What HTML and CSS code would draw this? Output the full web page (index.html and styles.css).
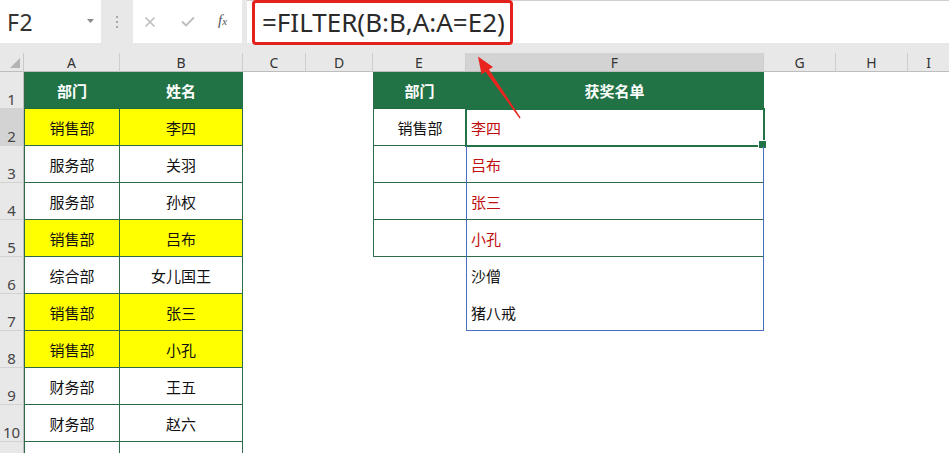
FILE: index.html
```html
<!DOCTYPE html>
<html lang="zh-CN">
<head>
<meta charset="utf-8">
<title>FILTER</title>
<link rel="stylesheet" href="styles.css">
</head>
<body>
<div class="app">
  <div class="toolbar">
    <div class="namebox"><span class="ref">F2</span><svg class="caret" width="7" height="4" viewBox="0 0 7 4"><path d="M0 0h7L3.5 4z" fill="#8a8a8a"/></svg></div>
    <div class="grip"><i></i><i></i><i></i></div>
    <div class="fbtns">
      <svg class="ico" width="12" height="12" viewBox="0 0 12 12"><path d="M1.5 1.5l9 9M10.5 1.5l-9 9" stroke="#bdbdbd" stroke-width="1.6" fill="none"/></svg>
      <svg class="ico" width="14" height="11" viewBox="0 0 14 11"><path d="M1 5.5l4 4L13 1.5" stroke="#bdbdbd" stroke-width="1.8" fill="none"/></svg>
      <span class="fx">f<span class="fxs">x</span></span>
    </div>
    <div class="fbar"><div class="formula">=FILTER(B:B,A:A=E2)</div></div>
  </div>
  <div class="band"></div>
  <div class="sheet">
    <div class="corner"><svg width="10" height="10" viewBox="0 0 10 10"><path d="M10 0V10H0z" fill="#b4b4b4"/></svg></div>
    <div class="ch">A</div><div class="ch">B</div><div class="ch">C</div><div class="ch">D</div><div class="ch">E</div><div class="ch sel">F</div><div class="ch">G</div><div class="ch">H</div><div class="ch last">I</div>

    <div class="rh">1</div>
    <div class="t first hd">部门</div><div class="t hd">姓名</div><div class="c"></div><div class="c"></div>
    <div class="t first hd">部门</div><div class="t hd">获奖名单</div><div class="c"></div><div class="c"></div><div class="c"></div>

    <div class="rh sel">2</div>
    <div class="t first y">销售部</div><div class="t y">李四</div><div class="c"></div><div class="c"></div>
    <div class="e">销售部</div><div class="f red gl cur">李四</div><div class="c"></div><div class="c"></div><div class="c"></div>

    <div class="rh">3</div>
    <div class="t first">服务部</div><div class="t">关羽</div><div class="c"></div><div class="c"></div>
    <div class="e"></div><div class="f red gl">吕布</div><div class="c"></div><div class="c"></div><div class="c"></div>

    <div class="rh">4</div>
    <div class="t first">服务部</div><div class="t">孙权</div><div class="c"></div><div class="c"></div>
    <div class="e"></div><div class="f red gl">张三</div><div class="c"></div><div class="c"></div><div class="c"></div>

    <div class="rh">5</div>
    <div class="t first y">销售部</div><div class="t y">吕布</div><div class="c"></div><div class="c"></div>
    <div class="e"></div><div class="f red gl">小孔</div><div class="c"></div><div class="c"></div><div class="c"></div>

    <div class="rh">6</div>
    <div class="t first">综合部</div><div class="t">女儿国王</div><div class="c"></div><div class="c"></div>
    <div class="c"></div><div class="f">沙僧</div><div class="c"></div><div class="c"></div><div class="c"></div>

    <div class="rh">7</div>
    <div class="t first y">销售部</div><div class="t y">张三</div><div class="c"></div><div class="c"></div>
    <div class="c"></div><div class="f bl">猪八戒</div><div class="c"></div><div class="c"></div><div class="c"></div>

    <div class="rh">8</div>
    <div class="t first y">销售部</div><div class="t y">小孔</div><div class="c"></div><div class="c"></div>
    <div class="c"></div><div class="c"></div><div class="c"></div><div class="c"></div><div class="c"></div>

    <div class="rh">9</div>
    <div class="t first">财务部</div><div class="t">王五</div><div class="c"></div><div class="c"></div>
    <div class="c"></div><div class="c"></div><div class="c"></div><div class="c"></div><div class="c"></div>

    <div class="rh">10</div>
    <div class="t first">财务部</div><div class="t">赵六</div><div class="c"></div><div class="c"></div>
    <div class="c"></div><div class="c"></div><div class="c"></div><div class="c"></div><div class="c"></div>

    <div class="rh"></div>
    <div class="t first"></div><div class="t"></div><div class="c"></div><div class="c"></div>
    <div class="c"></div><div class="c"></div><div class="c"></div><div class="c"></div><div class="c"></div>
  </div>
  <svg class="arrow" width="949" height="453" viewBox="0 0 949 453"><polygon points="478,56.5 493,67 489,69.6 520.6,117.6 519.6,118.4 485.4,71.8 481.5,74.6" fill="#e8261f"/></svg>
</div>
</body>
</html>
```
FILE: styles.css
```css
* { box-sizing: border-box; }
html, body { margin: 0; padding: 0; }
body {
  width: 949px;
  height: 453px;
  overflow: hidden;
  background: #fff;
  font-family: "Noto Sans", "Noto Sans CJK SC", sans-serif;
}
.app { position: relative; width: 949px; height: 453px; overflow: hidden; }

.toolbar {
  display: flex;
  height: 44px;
  background: #e8e8e8;
}
.namebox {
  width: 101px;
  height: 43px;
  background: #fff;
  display: flex;
  align-items: center;
  justify-content: space-between;
  padding: 0 7px 0 7px;
}
.ref { font-size: 23px; color: #333; letter-spacing: 0.5px; }
.caret { margin-right: 0; margin-top: -2px; }
.grip {
  width: 32px;
  display: flex;
  flex-direction: column;
  align-items: center;
  justify-content: center;
  gap: 3px;
  padding-bottom: 1px;
}
.grip i { width: 2px; height: 2px; background: #a8a8a8; display: block; }
.fbtns {
  width: 109px;
  height: 43px;
  background: #fff;
  display: flex;
  align-items: center;
  padding-left: 11px;
  gap: 0;
}
.fbtns .ico:first-child { margin-right: 25px; }
.fbtns .ico:nth-child(2) { margin-right: 23px; }
.fx {
  font-family: "Liberation Serif", "DejaVu Serif", serif;
  font-style: italic;
  font-size: 15px;
  color: #555;
  margin-top: -2px;
}
.fxs { font-size: 11px; }
.fbar {
  flex: 1;
  margin-left: 5px;
  height: 43px;
  background: #fff;
  border-top: 1px solid #d0d0d0;
}
.formula {
  margin: -1px 0 0 5px;
  width: 261px;
  height: 45px;
  border: 3px solid #e3221d;
  border-radius: 4px;
  padding-left: 7px;
  font-size: 26px;
  line-height: 38px;
  color: #2a2a2a;
  white-space: nowrap;
}
.band { height: 9px; background: #e8e8e8; }

.sheet {
  display: grid;
  grid-template-columns: 24px 96px 123px 63px 67px 93px 298px 72px 72px 1fr;
  grid-template-rows: 19px repeat(11, 37px);
  background: #fff;
}
.corner {
  background: #e8e8e8;
  border-right: 1px solid #c9c9c9;
  border-bottom: 1px solid #bdbdbd;
  display: flex;
  align-items: flex-end;
  justify-content: flex-end;
  padding: 0 3px 3px 0;
}
.ch {
  background: #e8e8e8;
  border-right: 1px solid #cdcdcd;
  border-bottom: 1px solid #bdbdbd;
  font-size: 14px;
  color: #333;
  text-align: center;
  line-height: 20px;
}
.ch.sel { background: #d3d3d3; }
.ch.last { border-right: none; }
.rh {
  background: #e8e8e8;
  border-right: 1px solid #bdbdbd;
  border-bottom: 1px solid #d2d2d2;
  font-size: 15px;
  color: #444;
  display: flex;
  align-items: flex-end;
  justify-content: center;
  line-height: 18px;
  padding-bottom: 0;
}
.rh.sel { background: #d3d3d3; }
.c { background: #fff; }

.t, .e {
  border-right: 1px solid #2f6b49;
  border-bottom: 1px solid #2f6b49;
  font-size: 15px;
  color: #111;
  display: flex;
  align-items: center;
  justify-content: center;
}
.t.first { border-left: 1px solid #2f6b49; }
.e { border-left: 1px solid #2f6b49; border-right: none; }
.hd {
  background: #217346;
  color: #fff;
  font-weight: bold;
  border-right-color: #217346;
  border-left-color: #217346;
  border-bottom-color: #1e6a40;
}
.y { background: #ffff00; }

.f {
  border-left: 1px solid #4a6fc2;
  border-right: 1px solid #4a6fc2;
  font-size: 15px;
  color: #111;
  display: flex;
  align-items: center;
  padding-left: 4px;
  position: relative;
}
.f.red { color: #c00f0f; }
.f.gl { border-bottom: 1px solid #2f6b49; }
.f.bl { border-bottom: 1px solid #4a6fc2; }
.f.cur { outline: 2px solid #217346; outline-offset: -1px; }
.f.cur::after {
  content: "";
  position: absolute;
  right: -4px;
  bottom: -4px;
  width: 7px;
  height: 7px;
  background: #217346;
  border: 1px solid #fff;
}

.arrow { position: absolute; left: 0; top: 0; pointer-events: none; }
```
